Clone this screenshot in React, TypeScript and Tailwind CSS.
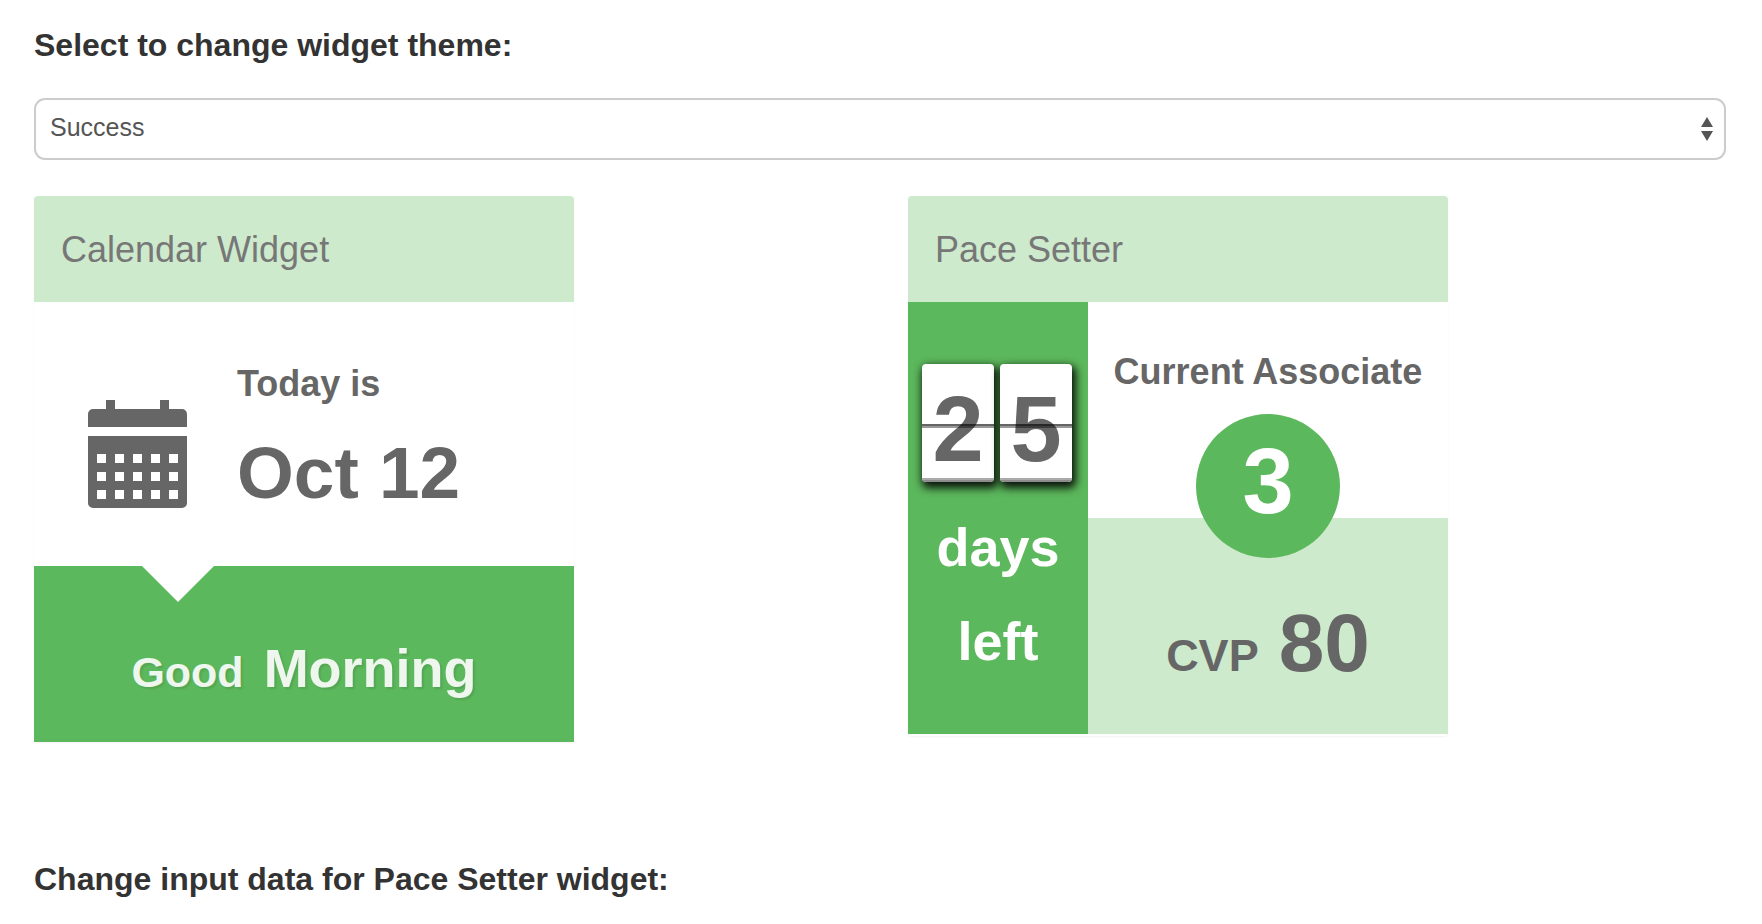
import { useState } from 'react';

type Theme = { label: string; solid: string; soft: string };

const THEMES: Record<string, Theme> = {
  success: { label: 'Success', solid: 'bg-[#5cb85c]', soft: 'bg-[#cdeacd]' },
  primary: { label: 'Primary', solid: 'bg-[#337ab7]', soft: 'bg-[#c9dff1]' },
  info: { label: 'Info', solid: 'bg-[#5bc0de]', soft: 'bg-[#d3eef6]' },
  warning: { label: 'Warning', solid: 'bg-[#f0ad4e]', soft: 'bg-[#fbe6c8]' },
  danger: { label: 'Danger', solid: 'bg-[#d9534f]', soft: 'bg-[#f5cfce]' },
};

function CalendarIcon() {
  return (
    <svg
      viewBox="0 0 99 108"
      className="h-[108px] w-[99px] shrink-0"
      fill="#666666"
      aria-hidden="true"
    >
      <path d="M18 0h9v9h45V0h9v9h13a5 5 0 0 1 5 5v13H0V14a5 5 0 0 1 5-5h13z" />
      <path
        fillRule="evenodd"
        d="M0 36h99v67a5 5 0 0 1-5 5H5a5 5 0 0 1-5-5z
           M9 54v9h9v-9zM27 54v9h9v-9zM45 54v9h9v-9zM63 54v9h9v-9zM81 54v9h9v-9z
           M9 72v9h9v-9zM27 72v9h9v-9zM45 72v9h9v-9zM63 72v9h9v-9zM81 72v9h9v-9z
           M9 90v9h9v-9zM27 90v9h9v-9zM45 90v9h9v-9zM63 90v9h9v-9zM81 90v9h9v-9z"
      />
    </svg>
  );
}

function WidgetHeader({ title, theme }: { title: string; theme: Theme }) {
  return (
    <header className={`h-[106px] rounded-t px-[27px] pt-[30px] ${theme.soft}`}>
      <h3 className="text-[36px] leading-[48px] text-[#777777]">{title}</h3>
    </header>
  );
}

function CalendarWidget({ theme }: { theme: Theme }) {
  return (
    <section className="w-full max-w-[540px] rounded shadow-[0_1px_2px_rgba(0,0,0,0.05)]">
      <WidgetHeader title="Calendar Widget" theme={theme} />
      <div className="flex gap-[50px] bg-white pb-12 pl-[54px] pt-[58px] font-bold text-[#666666]">
        <div className="pt-10">
          <CalendarIcon />
        </div>
        <div className="flex flex-col gap-5">
          <p className="text-[36px] leading-[48px]">Today is</p>
          <p className="text-[73px] leading-[90px]">Oct 12</p>
        </div>
      </div>
      <div className={`relative h-44 pt-[62px] ${theme.solid}`}>
        <svg
          viewBox="0 0 72 36"
          className="absolute left-[108px] top-0 h-9 w-[72px]"
          fill="#ffffff"
          aria-hidden="true"
        >
          <path d="M0 0h72L36 36z" />
        </svg>
        <p className="flex items-baseline justify-center gap-5 font-bold leading-[80px] text-white/90 [text-shadow:2px_2px_2px_rgba(0,0,0,0.1)]">
          <span className="text-[43px]">Good</span>
          <span className="text-[54px]">Morning</span>
        </p>
      </div>
    </section>
  );
}

function FlipDigit({ digit }: { digit: string }) {
  return (
    <div className="relative flex h-[118px] w-[72px] justify-center rounded bg-white pt-3 shadow-[2px_4px_8px_2px_rgba(0,0,0,0.9)]">
      <span className="text-[92px] font-bold leading-[106px] text-[#666666]">{digit}</span>
      <span className="absolute inset-x-0 top-[60px] h-1 border-b-2 border-t-2 border-b-black/40 border-t-black/60" />
      <span className="absolute inset-x-0 bottom-0 h-1 rounded-b border-b-2 border-t-2 border-b-[#8c8c8c] border-t-[#aaaaaa]" />
    </div>
  );
}

function PaceSetterWidget({ theme }: { theme: Theme }) {
  return (
    <section className="w-full max-w-[540px] rounded pb-0.5 shadow-[0_1px_2px_rgba(0,0,0,0.05)]">
      <WidgetHeader title="Pace Setter" theme={theme} />
      <div className="grid h-[432px] grid-cols-3">
        <div className={`pt-[62px] ${theme.solid}`}>
          <div className="flex gap-1.5 pl-3.5">
            <FlipDigit digit="2" />
            <FlipDigit digit="5" />
          </div>
          <p className="mt-[18px] flex flex-col text-center text-[54px] font-bold leading-[94px] text-white">
            <span>days</span>
            <span>left</span>
          </p>
        </div>
        <div className="col-span-2 grid grid-rows-2 font-bold text-[#666666]">
          <div className="relative bg-white pt-[46px]">
            <p className="whitespace-nowrap text-center text-[36px] leading-[48px]">
              Current Associate
            </p>
            <div
              className={`absolute -bottom-10 left-1/2 flex size-36 -translate-x-1/2 justify-center rounded-full pt-[14px] ${theme.solid}`}
            >
              <span className="text-[92px] leading-[106px] text-white">3</span>
            </div>
          </div>
          <div className={`pt-[75px] ${theme.soft}`}>
            <p className="flex items-baseline justify-center gap-5 leading-[100px]">
              <span className="text-[45px]">CVP</span>
              <span className="text-[82px]">80</span>
            </p>
          </div>
        </div>
      </div>
    </section>
  );
}

export default function App() {
  const [themeKey, setThemeKey] = useState('success');
  const theme = THEMES[themeKey];

  return (
    <main className="bg-white pb-6 pl-[34px] pr-9 pt-[25px] font-['Liberation_Sans',Arial,sans-serif]">
      <label htmlFor="theme" className="block text-[32px] font-bold leading-10 text-[#333333]">
        Select to change widget theme:
      </label>
      <div className="relative mt-[33px]">
        <select
          id="theme"
          value={themeKey}
          onChange={(event) => setThemeKey(event.target.value)}
          className="block h-[62px] w-full appearance-none rounded-[11px] border-2 border-[#cccccc] bg-white pb-0.5 pl-3.5 pr-12 text-[25px] text-[#555555]"
        >
          {Object.entries(THEMES).map(([key, { label }]) => (
            <option key={key} value={key}>
              {label}
            </option>
          ))}
        </select>
        <svg
          viewBox="0 0 12 24"
          className="pointer-events-none absolute right-[13px] top-[19px] h-6 w-3"
          fill="#555555"
          aria-hidden="true"
        >
          <path d="M6 0l6 10H0zM0 14h12L6 24z" />
        </svg>
      </div>
      <div className="mt-9 grid grid-cols-2 items-start gap-14">
        <CalendarWidget theme={theme} />
        <PaceSetterWidget theme={theme} />
      </div>
      <h2 className="mt-[117px] text-[32px] font-bold leading-10 text-[#333333]">
        Change input data for Pace Setter widget:
      </h2>
    </main>
  );
}
